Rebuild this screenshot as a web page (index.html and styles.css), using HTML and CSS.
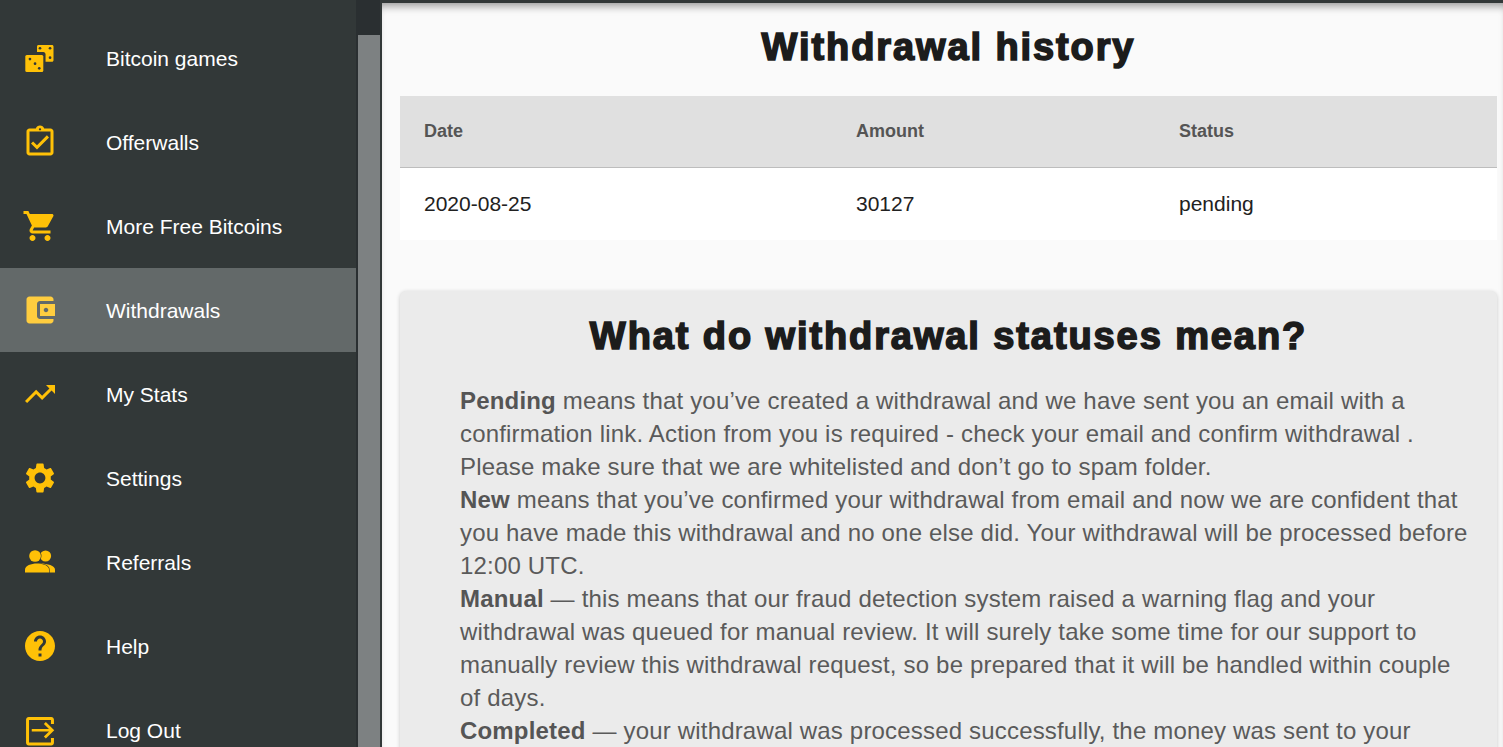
FILE: index.html
```html
<!DOCTYPE html>
<html lang="en">
<head>
  <meta charset="UTF-8">
  <title>Withdrawals</title>
  <link rel="stylesheet" href="styles.css">
</head>
<body>
  <div class="layout">
    <nav class="sidebar">
      <a class="nav-item">
        <svg class="nav-icon" viewBox="0 0 24 24">
          <path d="M11 3.300h9c.6 0 1 .4 1 1v9.200c0 .6-.4 1-1 1h-4.300V9.500c0-.8-.6-1.500-1.500-1.500H10V4.300c0-.6.4-1 1-1z"/>
          <rect x="2.200" y="10" width="12" height="11.300" rx="1"/>
          <circle class="pip" cx="12" cy="5.500" r=".9"/>
          <circle class="pip" cx="18.700" cy="5.500" r=".9"/>
          <circle class="pip" cx="18.700" cy="11.800" r=".9"/>
          <circle class="pip" cx="5.300" cy="12.700" r=".9"/>
          <circle class="pip" cx="8.700" cy="15.800" r=".9"/>
          <circle class="pip" cx="11.500" cy="18.900" r=".9"/>
        </svg>
        <span>Bitcoin games</span>
      </a>
      <a class="nav-item">
        <svg class="nav-icon" viewBox="0 0 24 24"><path d="M18 9l-1.410-1.420L10 14.170l-2.590-2.580L6 13l4 4zm1-6h-4.180C14.400 1.840 13.300 1 12 1c-1.300 0-2.400.84-2.820 2H5c-1.100 0-2 .9-2 2v14c0 1.100.9 2 2 2h14c1.100 0 2-.9 2-2V5c0-1.100-.9-2-2-2zm-7-.25c.41 0 .75.34.75.75s-.34.75-.75.75-.75-.34-.75-.75.34-.75.75-.75zM19 19H5V5h14v14z"/></svg>
        <span>Offerwalls</span>
      </a>
      <a class="nav-item">
        <svg class="nav-icon" viewBox="0 0 24 24"><path d="M7 18c-1.100 0-1.990.9-1.990 2S5.900 22 7 22s2-.9 2-2-.9-2-2-2zM1 2v2h2l3.600 7.590-1.350 2.450c-.16.28-.25.61-.25.96 0 1.100.9 2 2 2h12v-2H7.420c-.14 0-.25-.11-.25-.25l.03-.12.9-1.630h7.450c.75 0 1.410-.41 1.750-1.030l3.580-6.490c.08-.14.12-.31.12-.48 0-.55-.45-1-1-1H5.210l-.94-2H1zm16 16c-1.100 0-1.990.9-1.990 2s.89 2 1.990 2 2-.9 2-2-.9-2-2-2z"/></svg>
        <span>More Free Bitcoins</span>
      </a>
      <a class="nav-item active">
        <svg class="nav-icon" viewBox="0 0 24 24"><path d="M21 18v1c0 1.100-.9 2-2 2H5c-1.110 0-2-.9-2-2V5c0-1.100.89-2 2-2h14c1.100 0 2 .9 2 2v1h-9c-1.110 0-2 .9-2 2v8c0 1.100.89 2 2 2h9zm-9-2h10V8H12v8zm4-2.500c-.83 0-1.500-.67-1.500-1.500s.67-1.500 1.500-1.500 1.500.67 1.500 1.500-.67 1.500-1.500 1.500z"/></svg>
        <span>Withdrawals</span>
      </a>
      <a class="nav-item">
        <svg class="nav-icon" viewBox="0 0 24 24"><path d="M16 6l2.290 2.290-4.880 4.880-4-4L2 16.590 3.410 18l6-6 4 4 6.300-6.290L22 12V6z"/></svg>
        <span>My Stats</span>
      </a>
      <a class="nav-item">
        <svg class="nav-icon" viewBox="0 0 24 24"><path d="M19.140 12.940c.04-.3.06-.61.06-.94 0-.32-.02-.64-.07-.94l2.030-1.580c.18-.14.23-.41.12-.61l-1.920-3.320c-.12-.22-.37-.29-.59-.22l-2.390.96c-.5-.38-1.030-.7-1.620-.94l-.36-2.540c-.04-.24-.24-.41-.48-.41h-3.840c-.24 0-.43.17-.47.41l-.36 2.540c-.59.24-1.130.57-1.620.94l-2.390-.96c-.22-.08-.47 0-.59.22L2.740 8.870c-.12.21-.08.47.12.61l2.030 1.580c-.05.3-.09.63-.09.94s.02.64.07.94l-2.030 1.580c-.18.14-.23.41-.12.61l1.920 3.320c.12.22.37.29.59.22l2.390-.96c.5.38 1.030.7 1.620.94l.36 2.540c.05.24.24.41.48.41h3.840c.24 0 .44-.17.47-.41l.36-2.540c.59-.24 1.130-.56 1.620-.94l2.390.96c.22.08.47 0 .59-.22l1.920-3.320c.12-.22.07-.47-.12-.61l-2.010-1.580zM12 15.600c-1.980 0-3.600-1.620-3.600-3.600s1.620-3.600 3.600-3.600 3.600 1.620 3.600 3.600-1.620 3.600-3.600 3.600z"/></svg>
        <span>Settings</span>
      </a>
      <a class="nav-item">
        <svg class="nav-icon" viewBox="0 0 24 24">
          <circle cx="15.700" cy="8" r="3.700"/>
          <path d="M12 13c5 0 10 1.500 10 4v2h-8z"/>
          <circle class="front" cx="8.700" cy="8" r="3.900"/>
          <path class="front" d="M2 19v-2c0-2.500 4-4 8-4s8 1.500 8 4v2z"/>
        </svg>
        <span>Referrals</span>
      </a>
      <a class="nav-item">
        <svg class="nav-icon" viewBox="0 0 24 24"><path d="M12 2C6.480 2 2 6.480 2 12s4.480 10 10 10 10-4.480 10-10S17.520 2 12 2zm1 17h-2v-2h2v2zm2.070-7.750l-.9.92C13.450 12.900 13 13.500 13 15h-2v-.5c0-1.100.45-2.100 1.170-2.830l1.240-1.260c.37-.36.59-.86.59-1.410 0-1.100-.9-2-2-2s-2 .9-2 2H8c0-2.210 1.790-4 4-4s4 1.790 4 4c0 .88-.36 1.680-.93 2.250z"/></svg>
        <span>Help</span>
      </a>
      <a class="nav-item">
        <svg class="nav-icon" viewBox="0 0 24 24">
          <path d="M4.500 3.300h15c1 0 1.800.8 1.800 1.800v2.900h-2V5.300H4.700v15h14.600v-3h2v3.200c0 1-.8 1.800-1.800 1.800H4.500c-1 0-1.800-.8-1.800-1.800V5.100c0-1 .8-1.800 1.800-1.800z"/>
          <path d="M6.500 11.300h11.500l-3.400-3.300 1.300-1.300 5.600 5.500-5.600 5.500-1.300-1.300 3.400-3.400H6.500z"/>
        </svg>
        <span>Log Out</span>
      </a>
    </nav>

    <div class="side-scroll"><div class="side-scroll-thumb"></div></div>

    <main class="content">
      <h1 class="page-title">Withdrawal history</h1>
      <table class="history">
        <thead>
          <tr>
            <th class="col-date">Date</th>
            <th class="col-amount">Amount</th>
            <th>Status</th>
          </tr>
        </thead>
        <tbody>
          <tr>
            <td>2020-08-25</td>
            <td>30127</td>
            <td>pending</td>
          </tr>
        </tbody>
      </table>

      <section class="card">
        <h2 class="card-title">What do withdrawal statuses mean?</h2>
        <p class="card-text">
          <strong>Pending</strong> means that you’ve created a withdrawal and we have sent you an email with a confirmation link. Action from you is required - check your email and confirm withdrawal . Please make sure that we are whitelisted and don’t go to spam folder.<br>
          <strong>New</strong> means that you’ve confirmed your withdrawal from email and now we are confident that you have made this withdrawal and no one else did. Your withdrawal will be processed before 12:00 UTC.<br>
          <strong>Manual</strong> — this means that our fraud detection system raised a warning flag and your withdrawal was queued for manual review. It will surely take some time for our support to manually review this withdrawal request, so be prepared that it will be handled within couple of days.<br>
          <strong>Completed</strong> — your withdrawal was processed successfully, the money was sent to your
        </p>
      </section>
    </main>
  </div>
</body>
</html>
```
FILE: styles.css
```css
html, body {
  margin: 0;
  height: 100%;
  overflow: hidden;
}
body {
  font-family: 'Liberation Sans', Arial, sans-serif;
  background-color: #323838;
}
.layout {
  display: flex;
  height: 747px;
  overflow: hidden;
}

/* sidebar */
.sidebar {
  flex: 0 0 356px;
  padding-top: 16px;
  box-sizing: border-box;
}
.nav-item {
  display: flex;
  align-items: center;
  height: 84px;
  color: #fff;
  font-size: 21px;
}
.nav-item span {
  padding-top: 2px;
}
.nav-item.active {
  background-color: #636969;
}
.nav-item.active .nav-icon {
  fill: #ffcd3f;
}
.nav-icon {
  flex: 0 0 36px;
  width: 36px;
  height: 36px;
  margin: 0 48px 0 22px;
  fill: #ffc107;
}
.nav-icon .pip {
  fill: #323838;
}
.nav-icon .front {
  stroke: #323838;
  stroke-width: .8;
  paint-order: stroke;
}
.side-scroll {
  flex: 0 0 24px;
  box-sizing: border-box;
  padding: 35px 0 0 2px;
  background-color: #2a2f31;
}
.side-scroll-thumb {
  height: 100%;
  background-color: #7d8182;
}

/* main column */
.content {
  flex: 1;
  min-width: 0;
  margin-top: 3px;
  border-left: 2px solid #323838;
  padding: 0 6px 0 18px;
  background-color: #fafafa;
  box-shadow: inset 0 8px 8px -5px rgba(0,0,0,0.4);
  overflow: hidden;
}
.page-title {
  margin: 0;
  padding-top: 22px;
  height: 93px;
  box-sizing: border-box;
  text-align: center;
  font-size: 38px;
  line-height: 45px;
  letter-spacing: 1.9px;
  color: #1c1c1c;
  -webkit-text-stroke: 1.6px #1c1c1c;
}
.history {
  width: 100%;
  table-layout: fixed;
  border-collapse: collapse;
  background-color: #fff;
}
.history th {
  height: 71px;
  padding: 0 24px;
  text-align: left;
  font-size: 18px;
  color: #555;
  background-color: #e0e0e0;
  border-bottom: 1px solid #bdbdbd;
}
.history td {
  height: 72px;
  padding: 0 24px;
  font-size: 21px;
  color: #212121;
}
.col-date {
  width: 384px;
}
.col-amount {
  width: 275px;
}

/* statuses card */
.card {
  margin-top: 51px;
  padding: 25px 25px 24px 60px;
  background-color: #ebebeb;
  border-radius: 6px;
  box-shadow: 0 1px 4px rgba(0,0,0,0.2);
}
.card-title {
  margin: 0 -25px 28px -60px;
  text-align: center;
  font-size: 38px;
  line-height: 40px;
  letter-spacing: 1.9px;
  color: #1c1c1c;
  -webkit-text-stroke: 1.6px #1c1c1c;
}
.card-text {
  margin: 0;
  font-size: 24px;
  line-height: 33px;
  letter-spacing: 0.18px;
  color: #5a5a5a;
}
.card-text strong {
  color: #555;
}
```
